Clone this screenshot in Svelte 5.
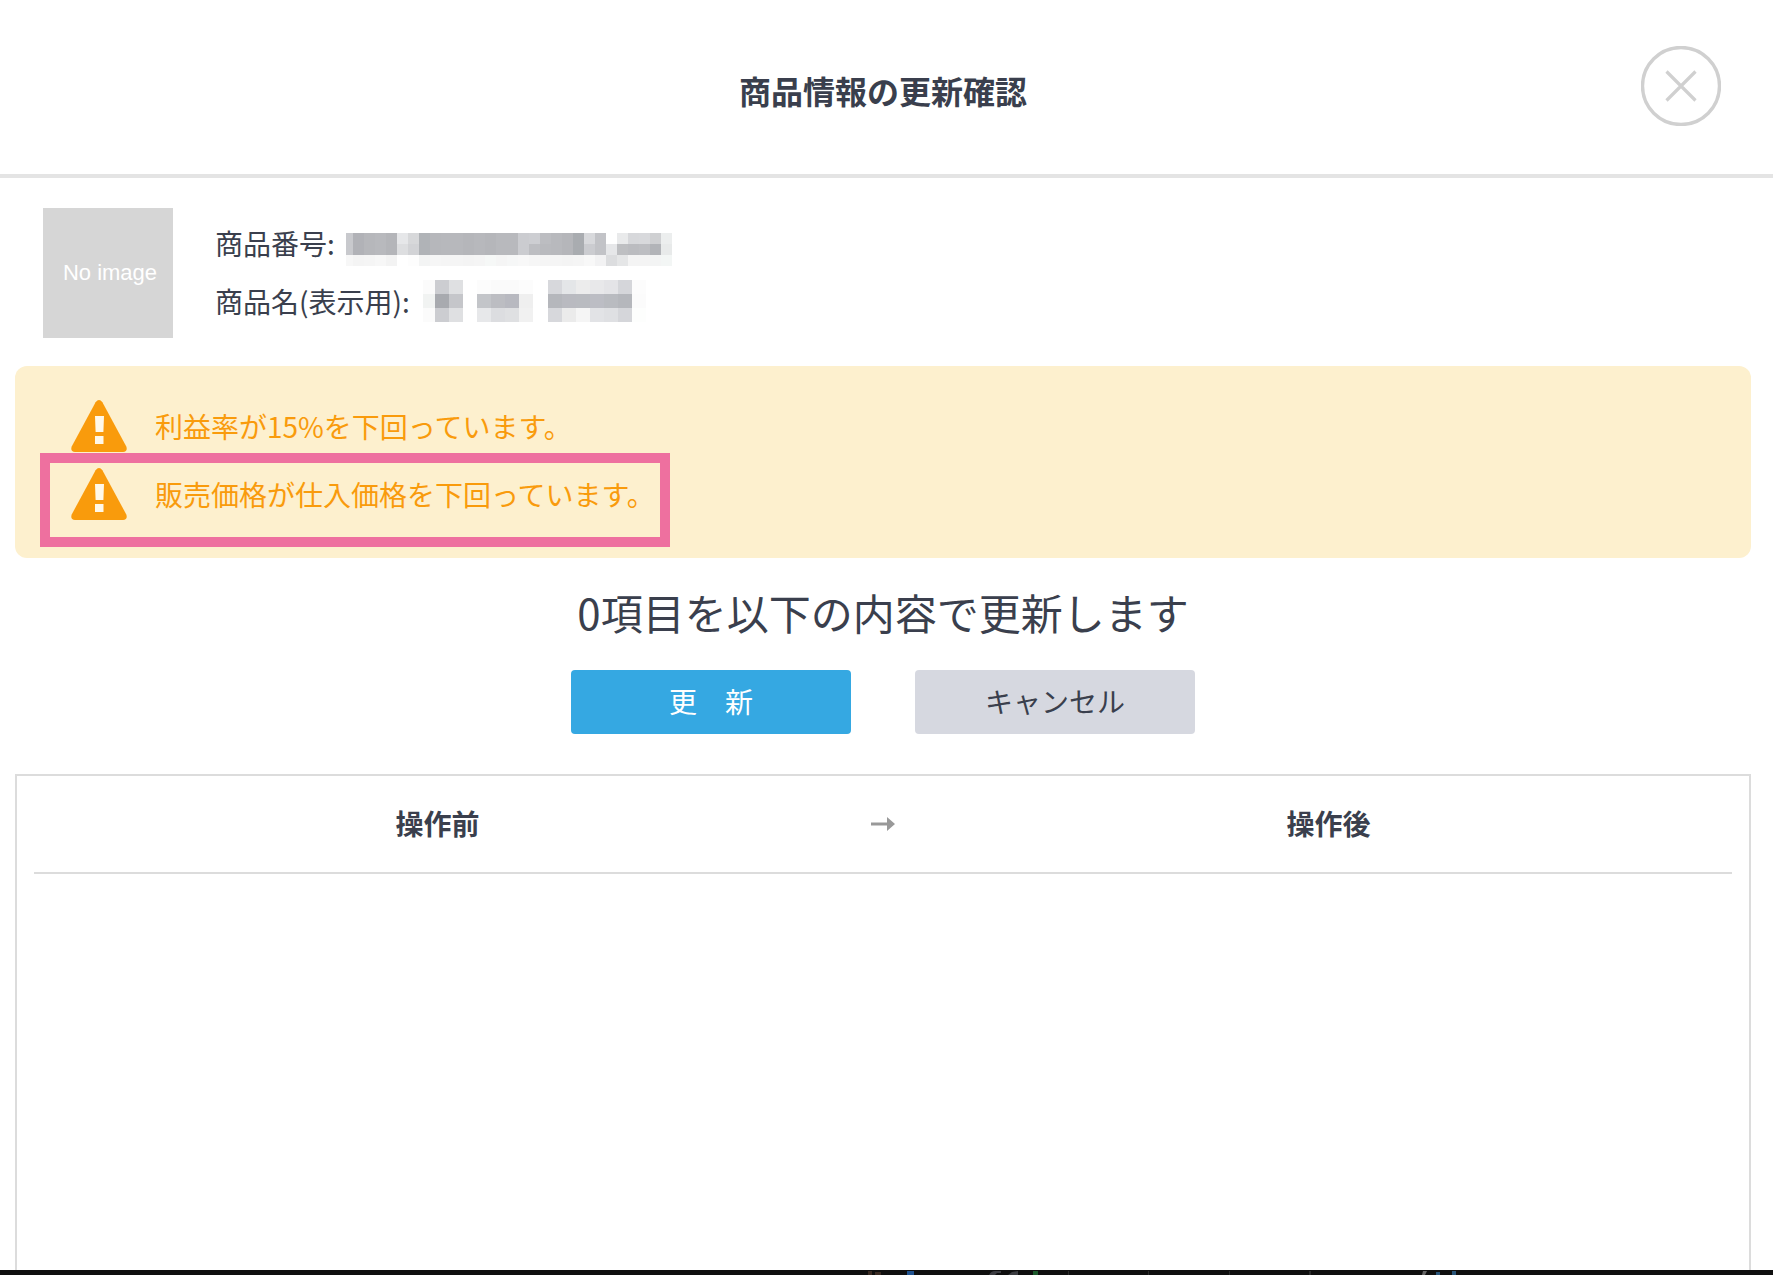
<script>
  const warnings = [
    '利益率が15%を下回っています。',
    '販売価格が仕入価格を下回っています。'
  ];

  // Censored values: column edges, row edges and the shade of every tile.
  const numberMask = tiles(
    [0, 7, 18, 29, 40, 51, 62, 73, 84, 95, 106, 117, 128, 139, 150, 161, 172, 183, 194, 205, 216, 227, 238, 249, 260, 271, 282, 293, 304, 315, 326],
    [18, 29, 40, 51],
    [
      'c8c9cd b1b2b7 b6b7bb b8b9bd b4b5b9 e6e7e9 d7d8da b0b3b7 b6b7bb b7b8bc b7b8bc b5b6ba b7b8bc b5b6ba b8b9bd b8b9bd cbccd0 cdced2 bcbdc1 b8b9bd b5b6ba a9acb0 d8d9dc c2c3c7 ffffff e9eaeb d7d8db d8d9dc cfd0d2 eceeee',
      'c8c9cd b1b2b7 b6b7bb b8b9bd b4b5b9 dddee0 d2d3d6 b0b3b7 b6b7bb b7b8bc b7b8bc b5b6ba b7b8bc b5b6ba b8b9bd b8b9bd cbccd0 bdbec2 b9babe b8b9bd b5b6ba a9acb0 cbccd0 c2c3c7 e6e7e9 bebfc2 bbbcc0 bdbec2 b2b4b8 e8eaea',
      'f7f7f7 f4f4f4 f5f5f5 f7f7f7 f3f3f3 ffffff fdfdfd f3f4f4 f6f6f6 f5f5f5 f5f5f5 f4f4f4 f5f5f5 f6f8f7 f5f5f5 f6f7f7 f8f8f8 f6f6f6 f5f5f5 f5f5f5 f4f4f4 f5f5f5 f8f8f8 f2f2f3 dcdddf e5e6e7 f4f4f4 f4f4f4 f3f4f4 f3f6f5'
    ]
  );
  const nameMask = tiles(
    [2, 14, 28, 42, 56, 70, 84, 98, 112, 127, 141, 155, 169, 183, 197, 211, 225],
    [7, 21, 35, 49],
    [
      'fbfbfb cccdd1 dfe0e2 ffffff fcfcfc fafafa fafafa fcfcfc ffffff d7d8dc e4e6e8 ececec e8e8ea e4e4e7 d5d6da fcfcfc',
      'f1f3f2 a8aaaf c5c6ca ffffff c3c5c9 bcbdc2 b8b9c0 efefef ffffff b5b7bc b9bac0 b9bbc0 bcbdc4 b9bbc0 b5b7bc fbfbfb',
      'fbfbfb cccdd1 dfe0e2 ffffff e7e8ea dcdde0 dfe0e2 f1f1f1 ffffff d7d8dc ebebeb f5f5f5 e2e3e6 dfe0e3 d5d6da fdfefd'
    ]
  );

  function tiles(xs, ys, rows) {
    return rows.flatMap((row, r) =>
      row.split(' ').map((shade, c) => ({
        x: xs[c],
        y: ys[r],
        w: xs[c + 1] - xs[c],
        h: ys[r + 1] - ys[r],
        fill: '#' + shade
      }))
    );
  }
</script>

{#snippet mask(cells, width, label)}
  <svg {width} height="58" role="img" aria-label={label} shape-rendering="crispEdges">
    {#each cells as t}
      <rect x={t.x} y={t.y} width={t.w} height={t.h} fill={t.fill} />
    {/each}
  </svg>
{/snippet}

<div class="page">
  <header>
    <h1>商品情報の更新確認</h1>
    <button class="close" type="button" aria-label="閉じる">
      <svg viewBox="0 0 80 80" width="80" height="80" fill="none" stroke="#d0d0d0">
        <circle cx="40" cy="40" r="38.5" stroke-width="3.4" />
        <path d="M25.5 25.5L54.5 54.5M54.5 25.5L25.5 54.5" stroke-width="3.2" />
      </svg>
    </button>
  </header>

  <main>
    <section class="product">
      <div class="thumb">No image</div>
      <dl>
        <div>
          <dt>商品番号:</dt>
          <dd>{@render mask(numberMask, 326, '非表示')}</dd>
        </div>
        <div>
          <dt>商品名(表示用):</dt>
          <dd>{@render mask(nameMask, 225, '非表示')}</dd>
        </div>
      </dl>
    </section>

    <ul class="alert">
      {#each warnings as text, i}
        <li class:marked={i === 1}>
          <svg viewBox="0 0 56 52" width="56" height="52" aria-hidden="true">
            <path fill="#f99b0c" d="M24.6 2.2Q28 -2 31.4 2.2L55.3 46.5Q57 51.6 52 52H4Q-1 51.6 .7 46.5Z" />
            <path fill="#fff8e8" d="M24 16h9l-.6 16h-7.8zM24 36h8.500v8h-8.500z" />
          </svg>
          <span>{text}</span>
        </li>
      {/each}
    </ul>

    <h2>0項目を以下の内容で更新します</h2>

    <div class="actions">
      <button class="primary" type="button">更　新</button>
      <button class="secondary" type="button">キャンセル</button>
    </div>

    <div class="changes">
      <table>
        <thead>
          <tr>
            <th scope="col">操作前</th>
            <th class="arrow" scope="col" aria-label="から">
              <svg viewBox="0 0 24 14" width="24" height="14" aria-hidden="true">
                <path fill="#999" d="M0 5.500h16V0L24 7l-8 7V8.500H0z" />
              </svg>
            </th>
            <th scope="col">操作後</th>
          </tr>
        </thead>
      </table>
    </div>
  </main>

  <div class="backdrop">
    <svg width="640" height="5" aria-hidden="true">
      <path fill="#3a2a22" d="M8 1h4v4h-4zM15 2h6v3h-6z" />
      <path fill="#20528f" d="M47 1h7v4h-7z" />
      <path fill="#3c3d42" d="M129 5q2-4 6-4h6v2h-4l-2 2zM148 5l4-3 6-1v4z" />
      <path fill="#1d5a2c" d="M173 1h5v4h-5z" />
      <path fill="#2b2b2b" d="M208 1h1v4h-1zM288 1h1v4h-1zM369 1h1v4h-1zM449 1h2v4h-2z" />
      <path fill="#666" d="M562 5l1-4h4l-2 4z" />
      <path fill="#285478" d="M576 2h4v3h-4zM592 1h4v4h-4z" />
    </svg>
  </div>
</div>

<style>
  :global(body) {
    margin: 0;
    background: #fff;
  }

  .page {
    box-sizing: border-box;
    display: flex;
    flex-direction: column;
    min-height: 100vh;
    color: #3a3f4d;
    font-family: 'Noto Sans CJK JP', sans-serif;
    font-size: 28px;
  }

  h1,
  h2,
  dl,
  dd,
  ul {
    margin: 0;
    padding: 0;
  }

  svg {
    display: block;
    flex: none;
  }

  button {
    border: 0;
    padding: 0;
    font: inherit;
    color: inherit;
    cursor: pointer;
  }

  header {
    display: grid;
    grid-template-columns: 1fr auto 1fr;
    padding: 46px 52px 48px 45px;
    border-bottom: 4px solid #e4e4e4;
  }

  h1 {
    grid-column: 2;
    font-size: 32px;
    font-weight: 700;
    line-height: 88px;
    height: 80px;
  }

  .close {
    justify-self: end;
    width: 80px;
    height: 80px;
    background: none;
  }

  main {
    flex: 1;
    display: flex;
    flex-direction: column;
    padding: 30px 22px 0 15px;
  }

  .product {
    display: flex;
    align-items: center;
    gap: 42px;
    padding: 0 28px;
  }

  .thumb {
    box-sizing: border-box;
    width: 130px;
    padding-left: 4px;
    background: #d6d6d6;
    color: #fff;
    font: 22px/130px 'Liberation Sans', sans-serif;
    text-align: center;
  }

  dl div {
    display: flex;
    gap: 11px;
  }

  dt {
    line-height: 56px;
  }

  .alert {
    display: grid;
    gap: 16px;
    margin-top: 28px;
    padding: 34px 56px 38px;
    border-radius: 12px;
    background: #fdf0ce;
    color: #f99b0c;
    list-style: none;
  }

  .alert li {
    position: relative;
    justify-self: start;
    display: flex;
    align-items: center;
    gap: 28px;
    line-height: 52px;
  }

  .marked::after {
    content: '';
    position: absolute;
    inset: -15px -11px -27px -31px;
    border: 10px solid #ee709f;
  }

  .marked span {
    padding-right: 4px;
  }

  h2 {
    margin-top: 24px;
    font-size: 42px;
    font-weight: 400;
    line-height: 60px;
    text-align: center;
  }

  .actions {
    display: flex;
    justify-content: center;
    gap: 64px;
    margin-top: 28px;
  }

  .actions button {
    width: 280px;
    height: 64px;
    padding-bottom: 3px;
    border-radius: 4px;
  }

  .primary {
    background: #35a8e2;
    color: #fff;
  }

  .secondary {
    background: #d6d8e0;
  }

  .changes {
    flex: 1;
    margin-top: 40px;
    padding: 0 17px;
    border: 2px solid #dcdcdc;
    border-bottom: 0;
  }

  table {
    width: 100%;
    table-layout: fixed;
    border-collapse: separate;
    border-spacing: 0;
  }

  th {
    box-sizing: border-box;
    height: 98px;
    padding: 0 0 2px;
    border-bottom: 2px solid #dcdcdc;
    font-weight: 700;
    text-align: center;
    vertical-align: middle;
  }

  .arrow {
    width: 84px;
    padding: 0;
  }

  .arrow svg {
    margin: 0 auto;
  }

  .backdrop {
    height: 5px;
    padding-left: 860px;
    overflow: hidden;
    background: #0f0f0f;
  }
</style>
